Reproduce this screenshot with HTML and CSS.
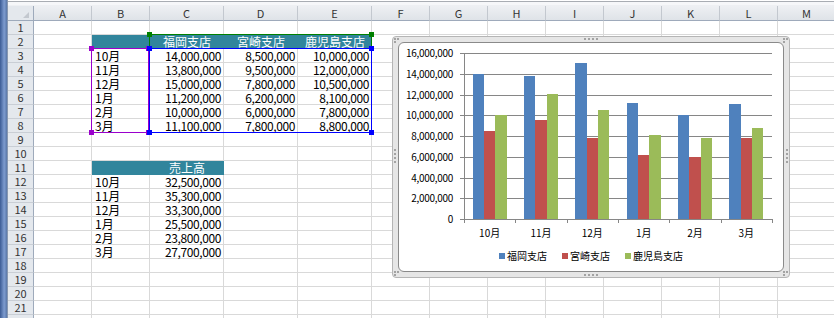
FILE: index.html
```html
<!DOCTYPE html>
<html lang="ja">
<head>
<meta charset="utf-8">
<title>支店別売上</title>
<link rel="stylesheet" href="styles.css">
</head>
<body>
<div class="window">
	<div class="side"></div>
	<div class="main">
		<div class="topline"></div>
		<div class="sheet grid" id="sheet">
			<div class="marks grid">
				<div class="mark cat"><span class="h tl"></span><span class="h tr"></span><span class="h bl"></span><span class="h br"></span></div>
				<div class="mark name"><span class="h tl"></span><span class="h tr"></span></div>
				<div class="mark val"><span class="h tl"></span><span class="h tr"></span><span class="h bl"></span><span class="h br"></span></div>
			</div>
		</div>
	</div>
</div>

<div class="chart">
	<span class="grip gt"></span>
	<span class="grip gb"></span>
	<span class="grip gl"></span>
	<span class="grip gr"></span>
	<span class="corner-grip c1"></span>
	<span class="corner-grip c2"></span>
	<span class="corner-grip c3"></span>
	<span class="corner-grip c4"></span>
	<div class="chart-area">
		<svg id="graph" width="384" height="228"></svg>
	</div>
</div>

<script src="script.js"></script>
</body>
</html>
```

FILE: styles.css
```css
body {
	margin: 0;
	width: 834px;
	height: 318px;
	overflow: hidden;
	position: relative;
	background: #fff;
	font-family: "Noto Sans CJK JP", "Noto Sans", sans-serif;
	color: #000;
}

.window {
	display: flex;
	height: 318px;
}

.side {
	flex: none;
	width: 7px;
	border-right: 1px solid #8797b0;
	background: linear-gradient(to right, #3b5b94, #7d9bcf 60%, #5a78a8);
}

.main {
	flex: 1;
	min-width: 0;
	overflow: hidden;
	display: flex;
	flex-direction: column;
}

.topline {
	flex: none;
	height: 6px;
	background: linear-gradient(#fff 0 1px, #a9adb3 1px 2px, #f6f7f9 2px 5px, #eef0f3 5px);
}

/* same tracks for the cells and for the range marks over them */
.grid {
	display: grid;
	grid-template-columns: 26px 58px 58px 74px 74px 74px repeat(8, 58px);
	grid-template-rows: 15px repeat(22, 14px);
}

.sheet {
	position: relative;
}

.corner,
.colhead,
.rowhead {
	box-sizing: border-box;
	background: #e4e8ed;
	color: #333;
	font-size: 11px;
	text-align: center;
	white-space: nowrap;
}

.corner {
	position: relative;
	border-right: 1px solid #9eaabb;
	border-bottom: 1px solid #9eaabb;
}

.corner:after {
	content: "";
	position: absolute;
	right: 4px;
	bottom: 2px;
	border-left: 6px solid transparent;
	border-bottom: 6px solid #c3c8cf;
}

.colhead {
	line-height: 14px;
	background: linear-gradient(#eef0f3, #dfe3e8);
	border-right: 1px solid #c3c8cf;
	border-bottom: 1px solid #9eaabb;
}

.rowhead {
	line-height: 13px;
	border-right: 1px solid #9eaabb;
	border-bottom: 1px solid #c9ced5;
}

.cell {
	box-sizing: border-box;
	border-right: 1px solid #d9d9d9;
	border-bottom: 1px solid #d9d9d9;
	padding: 0 2px 0 3px;
	font-size: 12px;
	line-height: 13px;
	white-space: nowrap;
}

.num {
	text-align: right;
	letter-spacing: -0.4px;
}

.head {
	background: #31859c;
	border-color: #31859c;
	color: #fff;
	text-align: center;
}

.marks {
	position: absolute;
	left: 0;
	top: 0;
	pointer-events: none;
}

.mark {
	position: relative;
	margin: -1px 0 0 -1px;
	border: 1px solid currentColor;
}

.cat {
	grid-row: 4 / 10;
	grid-column: 3 / 4;
	margin-right: 1px;
	color: #9a00cc;
}

.name {
	grid-row: 3 / 4;
	grid-column: 4 / 7;
	color: #008000;
}

.val {
	grid-row: 4 / 10;
	grid-column: 4 / 7;
	color: #0000ff;
}

.h {
	position: absolute;
	width: 5px;
	height: 5px;
	background: currentColor;
}

.tl { left: -3px; top: -3px; }
.tr { right: -3px; top: -3px; }
.bl { left: -3px; bottom: -3px; }
.br { right: -3px; bottom: -3px; }

/* chart object */
.chart {
	position: absolute;
	left: 392px;
	top: 36px;
	width: 398px;
	height: 242px;
	box-sizing: border-box;
	padding: 5px;
	border: 1px solid #b5b5b5;
	border-radius: 4px;
	background: #e6e6e6;
}

.chart-area {
	height: 100%;
	box-sizing: border-box;
	border: 1px solid #8a8a8a;
	border-radius: 6px;
	background: #fff;
	overflow: hidden;
}

.chart-area svg {
	display: block;
}

.grip,
.corner-grip {
	position: absolute;
	width: 2px;
	height: 2px;
	background: #a3a3a3;
}

.gt { left: 191px; top: 1px; box-shadow: 4px 0 #a3a3a3, 8px 0 #a3a3a3, 12px 0 #a3a3a3; }
.gb { left: 191px; bottom: 1px; box-shadow: 4px 0 #a3a3a3, 8px 0 #a3a3a3, 12px 0 #a3a3a3; }
.gl { left: 1px; top: 112px; box-shadow: 0 4px #a3a3a3, 0 8px #a3a3a3, 0 12px #a3a3a3; }
.gr { right: 1px; top: 112px; box-shadow: 0 4px #a3a3a3, 0 8px #a3a3a3, 0 12px #a3a3a3; }

.corner-grip { box-shadow: 3px 0 #a3a3a3, 0 3px #a3a3a3; }
.c1 { left: 1px; top: 1px; }
.c2 { right: 4px; top: 1px; }
.c3 { left: 1px; bottom: 4px; }
.c4 { right: 4px; bottom: 4px; }

.axis-label {
	font-family: "Noto Sans CJK JP", "Noto Sans", sans-serif;
	font-size: 10px;
	fill: #000;
}

.ylab {
	letter-spacing: -0.3px;
}
```

FILE: script.js
```js
let cols = ["A", "B", "C", "D", "E", "F", "G", "H", "I", "J", "K", "L", "M"];
let months = ["10月", "11月", "12月", "1月", "2月", "3月"];
let branches = ["福岡支店", "宮崎支店", "鹿児島支店"];
let sales = [
	[14000000, 13800000, 15000000, 11200000, 10000000, 11100000],
	[8500000, 9500000, 7800000, 6200000, 6000000, 7800000],
	[10000000, 12000000, 10500000, 8100000, 7800000, 8800000]
];
let total = [32500000, 35300000, 33300000, 25500000, 23800000, 27700000];
let colors = ["#4f81bd", "#c0504d", "#9bbb59"];

function fmt(n) {
	return n.toLocaleString("en-US");
}

// cell contents
let data = {};
data["B2"] = { text: "", cls: "head" };
for (let s = 0; s < 3; s++) {
	data[cols[s + 2] + "2"] = { text: branches[s], cls: "head" };
}
for (let m = 0; m < 6; m++) {
	data["B" + (m + 3)] = { text: months[m], cls: "" };
	for (let s = 0; s < 3; s++) {
		data[cols[s + 2] + (m + 3)] = { text: fmt(sales[s][m]), cls: "num" };
	}
}
data["B11"] = { text: "", cls: "head" };
data["C11"] = { text: "売上高", cls: "head" };
for (let m = 0; m < 6; m++) {
	data["B" + (m + 12)] = { text: months[m], cls: "" };
	data["C" + (m + 12)] = { text: fmt(total[m]), cls: "num" };
}

// sheet
let sheet = document.getElementById("sheet");
let marks = sheet.querySelector(".marks");

function add(cls, text, row, col) {
	let d = document.createElement("div");
	d.className = cls;
	d.textContent = text;
	d.style.gridArea = row + " / " + col;
	sheet.insertBefore(d, marks);
}

add("corner", "", 1, 1);
for (let i = 0; i < cols.length; i++) {
	add("colhead", cols[i], 1, i + 2);
}
for (let r = 1; r <= 22; r++) {
	add("rowhead", r, r + 1, 1);
	for (let i = 0; i < cols.length; i++) {
		let c = data[cols[i] + r];
		add(c ? "cell " + c.cls : "cell", c ? c.text : "", r + 1, i + 2);
	}
}

// chart
let svg = document.getElementById("graph");
let NS = "http://www.w3.org/2000/svg";

function el(name, attrs, text) {
	let e = document.createElementNS(NS, name);
	for (let k in attrs) e.setAttribute(k, attrs[k]);
	if (text) e.textContent = text;
	svg.appendChild(e);
	return e;
}

let plotLeft = 65, plotRight = 373, plotTop = 10, plotBottom = 176, max = 16000000;
let step = (plotRight - plotLeft) / 6;
let bw = step / 4.5;
let axis = "#868686";

for (let k = 0; k <= 8; k++) {
	let y = Math.round(plotBottom - k * (plotBottom - plotTop) / 8) + 0.5;
	el("line", { x1: plotLeft - 4, x2: plotRight, y1: y, y2: y, stroke: axis });
	el("text", { x: 54, y: y + 3.5, "text-anchor": "end", class: "axis-label ylab" }, fmt(k * 2000000));
}

for (let m = 0; m < 6; m++) {
	for (let s = 0; s < 3; s++) {
		let x = Math.round(plotLeft + m * step + 0.75 * bw + s * bw);
		let x2 = Math.round(plotLeft + m * step + 0.75 * bw + (s + 1) * bw);
		let h = Math.round(sales[s][m] / max * (plotBottom - plotTop));
		el("rect", { x: x, y: plotBottom - h, width: x2 - x, height: h, fill: colors[s] });
	}
	el("text", { x: plotLeft + (m + 0.5) * step, y: 194, "text-anchor": "middle", class: "axis-label" }, months[m]);
}

el("line", { x1: plotLeft + 0.5, x2: plotLeft + 0.5, y1: plotTop, y2: plotBottom + 1, stroke: axis });
for (let m = 0; m <= 6; m++) {
	let x = Math.round(plotLeft + m * step) + 0.5;
	el("line", { x1: x, x2: x, y1: plotBottom, y2: plotBottom + 4, stroke: axis });
}

// legend
let lx = [100, 163, 226];
for (let s = 0; s < 3; s++) {
	el("rect", { x: lx[s], y: 210, width: 6, height: 6, fill: colors[s] });
	el("text", { x: lx[s] + 8, y: 216.5, class: "axis-label" }, branches[s]);
}
```
